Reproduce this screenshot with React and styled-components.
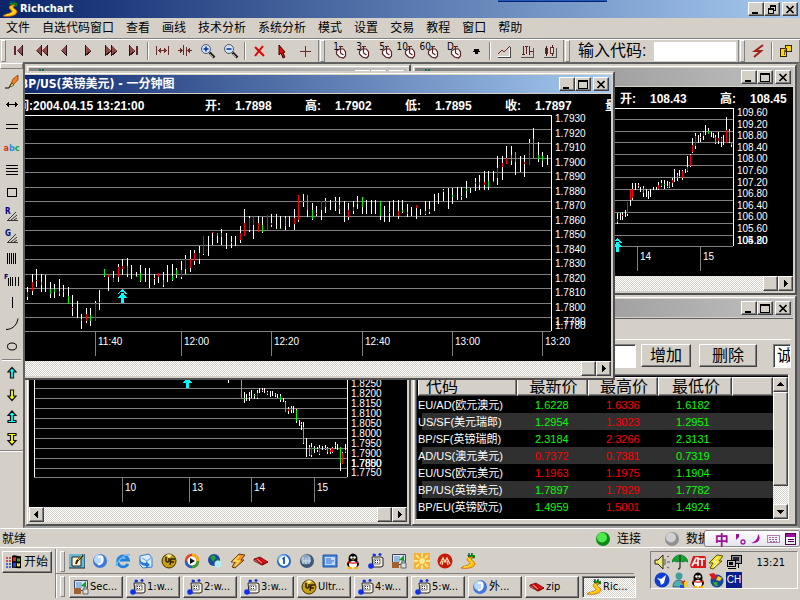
import React from 'react';
import styled, { createGlobalStyle, css } from 'styled-components';

const FACE = '#d4d0c8';
const UP = '#f00';
const DOWN = '#0f0';
const UI_FONT = '"Liberation Sans", "Noto Sans CJK SC", sans-serif';

/* ---------- data ---------- */

const menus = ['文件', '自选代码窗口', '查看', '画线', '技术分析', '系统分析', '模式', '设置', '交易', '教程', '窗口', '帮助'];

// x, high, low, body colour, body top, body bottom
const minuteCandles = [
  [27, 287, 300, UP, 292, 297], [32, 274, 295, UP, 282, 291], [36, 269, 287, UP, 280, 281],
  [41, 274, 292, DOWN, 282, 285], [45, 275, 292], [50, 282, 298, DOWN, 289, 294],
  [54, 284, 298, DOWN, 289, 292], [59, 279, 296, DOWN, 291, 294], [63, 285, 297, DOWN, 291, 292],
  [68, 287, 304, DOWN, 296, 304], [72, 295, 316, UP, 307, 308], [77, 301, 318],
  [81, 314, 329, DOWN, 319, 321], [86, 308, 323, UP, 314, 321], [90, 308, 326, DOWN, 315, 321],
  [95, 301, 321, UP, 303, 321], [99, 290, 310, UP, 302, 303], [104, 269, 277, DOWN, 269, 276],
  [108, 275, 291, UP, 275, 277], [113, 271, 282, UP, 278, 282], [118, 264, 282, UP, 267, 277],
  [122, 259, 275, UP, 266, 269], [127, 258, 277, DOWN, 266, 274], [131, 265, 279],
  [136, 272, 277, DOWN, 276, 277], [140, 265, 282, DOWN, 273, 281], [145, 268, 282],
  [149, 268, 288], [154, 274, 285, UP, 278, 279], [158, 273, 283, UP, 273, 277],
  [163, 272, 287, DOWN, 280, 285], [167, 265, 282], [172, 264, 281, DOWN, 276, 280],
  [176, 268, 278, DOWN, 270, 275], [181, 261, 279, UP, 270, 277], [185, 255, 274, UP, 259, 269],
  [190, 250, 272, UP, 259, 268], [194, 250, 265, UP, 253, 261], [199, 246, 264, UP, 253, 259],
  [203, 236, 255, UP, 236, 254], [208, 236, 256], [212, 232, 245, UP, 232, 233],
  [217, 233, 243, DOWN, 233, 236], [221, 229, 245, DOWN, 233, 237], [226, 233, 249],
  [231, 236, 248, UP, 242, 243], [235, 236, 246], [240, 226, 243, UP, 233, 240],
  [244, 209, 236, UP, 223, 236], [249, 216, 232, UP, 218, 230], [253, 217, 239, UP, 217, 225],
  [258, 216, 232, UP, 223, 232], [262, 217, 233, DOWN, 225, 232], [267, 215, 230, UP, 215, 230],
  [271, 214, 227, UP, 223, 225], [276, 214, 229], [280, 216, 229, DOWN, 228, 229],
  [285, 216, 230, DOWN, 218, 226], [289, 216, 227], [294, 209, 230, UP, 218, 224],
  [298, 195, 222, UP, 195, 220], [303, 194, 207, UP, 201, 202], [307, 195, 217, DOWN, 195, 210],
  [312, 203, 220, DOWN, 210, 219], [316, 206, 216, UP, 213, 214], [321, 201, 220, UP, 201, 210],
  [325, 198, 213, UP, 201, 207], [330, 200, 210], [335, 197, 211, DOWN, 201, 203],
  [339, 197, 214, DOWN, 205, 209], [344, 201, 222], [348, 203, 220, UP, 210, 217],
  [353, 201, 214, UP, 207, 211], [357, 196, 209, DOWN, 202, 204], [362, 197, 214, DOWN, 197, 207],
  [366, 200, 214], [371, 200, 214], [375, 200, 214], [380, 201, 220, DOWN, 201, 216],
  [384, 206, 222], [389, 201, 222, UP, 212, 213], [393, 200, 216], [398, 200, 219, UP, 211, 216],
  [402, 200, 213, DOWN, 210, 212], [407, 204, 217, DOWN, 212, 214], [411, 207, 216],
  [416, 205, 219, UP, 205, 208], [420, 209, 215], [425, 201, 215, UP, 211, 214],
  [429, 201, 214, UP, 209, 212], [434, 194, 211], [438, 193, 204], [443, 189, 201, UP, 190, 192],
  [448, 188, 209], [452, 188, 204, DOWN, 195, 197], [457, 187, 200], [461, 187, 200, UP, 196, 197],
  [466, 181, 198, DOWN, 189, 191], [470, 188, 193], [475, 178, 191, DOWN, 182, 184],
  [479, 175, 190, DOWN, 182, 185], [484, 171, 190, UP, 182, 185], [488, 171, 190, DOWN, 181, 187],
  [493, 171, 182, DOWN, 181, 182], [497, 156, 185, UP, 168, 178], [502, 156, 180, UP, 163, 167],
  [506, 146, 164, UP, 158, 164], [511, 146, 165, DOWN, 155, 161], [515, 152, 175, DOWN, 152, 162],
  [520, 156, 172], [524, 155, 177, UP, 162, 164], [529, 139, 165, UP, 143, 165],
  [533, 128, 158, DOWN, 139, 158], [538, 142, 162, DOWN, 155, 159], [542, 152, 167, DOWN, 156, 161],
  [547, 155, 165],
];

const yenCandles = [
  [617, 213, 224, UP, 219, 222], [620, 213, 220], [622, 212, 220, UP, 215, 216], [625, 210, 217],
  [627, 202, 216, UP, 202, 214], [630, 190, 206, UP, 190, 200], [632, 183, 200, UP, 189, 198],
  [635, 183, 190], [638, 183, 188, UP, 185, 186], [640, 187, 192], [643, 186, 197, DOWN, 188, 193],
  [646, 189, 197], [648, 191, 199], [650, 189, 197], [653, 187, 190], [656, 187, 190],
  [658, 182, 190, UP, 185, 189], [661, 180, 187, UP, 183, 186], [664, 180, 189, DOWN, 184, 185],
  [667, 181, 188, UP, 186, 187], [669, 182, 188, DOWN, 183, 187], [672, 178, 187, UP, 180, 183],
  [674, 169, 182], [677, 173, 181, DOWN, 175, 178], [679, 170, 178, UP, 176, 177],
  [682, 170, 180, UP, 171, 178], [685, 169, 173], [687, 156, 172, UP, 167, 171],
  [690, 154, 167, UP, 155, 166], [692, 138, 153, UP, 145, 152], [695, 133, 149, UP, 136, 146],
  [698, 135, 143], [700, 133, 142, UP, 137, 138], [703, 131, 140, UP, 132, 136], [705, 125, 135],
  [708, 128, 134, DOWN, 131, 134], [711, 132, 137], [713, 133, 138], [715, 135, 144, DOWN, 137, 143],
  [718, 132, 144, UP, 138, 141], [721, 137, 147, UP, 138, 142], [723, 135, 145],
  [726, 117, 143, UP, 130, 143], [729, 129, 143, DOWN, 131, 142], [731, 142, 147, DOWN, 142, 145],
];

const dailyCandles = [
  [228, 380, 383], [241, 380, 398, DOWN, 380, 398], [244, 392, 403, DOWN, 398, 399],
  [246, 394, 401], [249, 392, 401, UP, 396, 397], [251, 390, 398], [254, 394, 399, DOWN, 395, 396],
  [257, 390, 399, UP, 393, 398], [259, 388, 393], [262, 388, 392, UP, 390, 391], [264, 388, 393],
  [267, 391, 395, UP, 392, 394], [270, 391, 397], [272, 391, 396], [275, 393, 397, DOWN, 394, 395],
  [277, 394, 398], [280, 394, 402, DOWN, 396, 400], [283, 398, 402], [285, 401, 412, DOWN, 402, 412],
  [288, 407, 414, UP, 409, 411], [291, 406, 413, DOWN, 408, 410], [293, 406, 413],
  [296, 409, 423, DOWN, 410, 421], [299, 420, 426], [301, 422, 430, UP, 424, 425],
  [303, 422, 444, DOWN, 427, 443], [306, 438, 457], [309, 445, 456, DOWN, 447, 455],
  [311, 443, 457, UP, 447, 455], [314, 446, 453, DOWN, 448, 449], [317, 447, 452, UP, 449, 450],
  [319, 445, 455, UP, 448, 454], [322, 446, 450], [325, 445, 450, UP, 448, 449],
  [327, 447, 454, DOWN, 448, 452], [330, 449, 454, UP, 450, 452], [332, 447, 453, UP, 448, 452],
  [335, 442, 449, DOWN, 445, 446], [337, 444, 450], [340, 447, 471, DOWN, 447, 463],
  [342, 452, 464, UP, 453, 464], [345, 444, 453, UP, 450, 452],
];

const charts = {
  minute: {
    origin: [0, 115], left: 0, right: 551, bottom: 331, candles: minuteCandles,
    grid: [129, 143, 158, 172, 187, 201, 216, 230, 245, 259, 274, 288, 303, 317],
    labels: [
      ['1.7930', 118], ['1.7920', 133], ['1.7910', 147], ['1.7900', 162], ['1.7890', 176],
      ['1.7880', 191], ['1.7870', 205], ['1.7860', 220], ['1.7850', 234], ['1.7840', 249],
      ['1.7830', 263], ['1.7820', 278], ['1.7810', 292], ['1.7800', 307], ['1.7790', 321], ['1.7780', 325],
    ],
    ticks: [['11:40', 95], ['12:00', 181], ['12:20', 271], ['12:40', 362], ['13:00', 452], ['13:20', 542]],
    arrow: [122, 289],
  },
  yen: {
    origin: [415, 108], left: 415, right: 733, bottom: 246, candles: yenCandles,
    grid: [119, 131, 142, 154, 165, 177, 189, 200, 212, 223, 235],
    labels: [
      ['109.60', 112], ['109.20', 124], ['108.80', 135], ['108.40', 147], ['108.00', 158],
      ['107.60', 170], ['107.20', 182], ['106.80', 193], ['106.40', 205], ['106.00', 216],
      ['105.60', 228], ['105.20', 240], ['104.80', 240],
    ],
    ticks: [['14', 637], ['15', 700]],
    arrow: [617, 238],
  },
  daily: {
    origin: [29, 339], left: 34, right: 347, bottom: 477, candles: dailyCandles, leftAxis: true,
    grid: [348, 358, 368, 378, 388, 398, 408, 418, 428, 438, 448, 458, 468],
    labels: [
      ['1.8250', 383], ['1.8200', 393], ['1.8150', 403], ['1.8100', 413], ['1.8050', 423],
      ['1.8000', 433], ['1.7950', 443], ['1.7900', 453], ['1.7850', 463], ['1.7800', 463], ['1.7750', 472],
    ],
    ticks: [['10', 122], ['13', 189], ['14', 251], ['15', 314]],
    arrow: [187, 374],
  },
};

const minuteQuote = [['开:', '1.7898'], ['高:', '1.7902'], ['低:', '1.7895'], ['收:', '1.7897'], ['量:', '']];
const yenQuote = [['开:', '108.43'], ['高:', '108.45']];

const quotes = [
  ['EU/AD(欧元澳元)', '1.6228', DOWN, '1.6336', UP, '1.6182', DOWN],
  ['US/SF(美元瑞郎)', '1.2954', DOWN, '1.3023', UP, '1.2951', DOWN],
  ['BP/SF(英镑瑞朗)', '2.3184', DOWN, '2.3266', UP, '2.3131', DOWN],
  ['AD/US(澳元美元)', '0.7372', UP, '0.7381', UP, '0.7319', DOWN],
  ['EU/US(欧元美元)', '1.1963', UP, '1.1975', UP, '1.1904', DOWN],
  ['BP/US(英镑美元)', '1.7897', DOWN, '1.7929', UP, '1.7782', DOWN],
  ['BP/EU(英镑欧元)', '1.4959', DOWN, '1.5001', UP, '1.4924', DOWN],
];

/* ---------- icons ---------- */

const Svg = ({ w = 16, h = 16, crisp = true, children }) => (
  <svg width={w} height={h} viewBox={`0 0 ${w} ${h}`} shapeRendering={crisp ? 'crispEdges' : 'auto'} fill="none" aria-hidden="true">
    {children}
  </svg>
);

const RichIcon = () => (
  <Svg crisp={false}>
    <path d="M9 0v4M12 0v4" stroke="#064" strokeWidth="1.500" />
    <path d="M7 2h8v3l-5 1z" fill="#0a8a1e" />
    <path d="M8 3h1M11 2h1M13 4h1" stroke="#063" strokeWidth="2" />
    <path d="M13 4C8 4 6 6 8 8c2 2 3 3 0 4-2 1-5 1-7 3 6 1 13 0 14-4 0-3-4-3-4-5 0-1 2-1 2-2z" fill="#ffc400" stroke="#d86000" strokeWidth=".8" />
    <path d="M9 5c-1 2 4 3 3 5-1 3-5 4-8 4" stroke="#ffe94a" />
  </Svg>
);

const Tri = ({ x, dir }) => (
  <g>
    <path d={dir < 0 ? `M${x + 6} 2v11l-6-5v-1z` : `M${x} 2v11l6-5v-1z`} fill="#8c4c4c" />
    <path d={dir < 0 ? `M${x + 5} 2v11M${x + 1} 8l5 5` : `M${x} 2v11M${x} 13l6-5`} stroke="#2c1212" />
  </g>
);
const Bar = ({ x }) => <path d={`M${x} 3h2v9h-2z`} fill="#5c2828" />;

const Magnifier = ({ plus }) => (
  <Svg crisp={false}>
    <path d="M9.500 9.500l5 5" stroke="#222" strokeWidth="2.500" />
    <path d="M10 11l3 3" stroke="#c0a0a0" />
    <circle cx="6" cy="6" r="4.500" fill="#cfe4ff" stroke="#556" strokeWidth="1" />
    <path d={plus ? 'M3.500 6h5M6 3.500v5' : 'M3.500 6h5'} stroke="#003090" strokeWidth="1.500" />
  </Svg>
);

const Clock = ({ label }) => (
  <Svg w={22} h={18} crisp={false}>
    <path d="M9.500 9v3l3 3 4 1 2-2v-4l-2-3h-4z" fill="#fff" stroke="#5c2020" strokeWidth="1.200" />
    <path d="M13.500 4v7l3 2M12 4.500h4" stroke="#5c2020" strokeWidth="1.200" />
    <text x="12" y="8" textAnchor="end" fontSize="10" fontFamily="DejaVu Sans Condensed" fill="#000">{label}</text>
  </Svg>
);

const navIcons = [
  ['第一根', <Svg><Bar x={3} /><Tri x={6} dir={-1} /></Svg>],
  ['快退', <Svg><Tri x={2} dir={-1} /><Tri x={8} dir={-1} /></Svg>],
  ['后退', <Svg><Tri x={4} dir={-1} /></Svg>],
  ['前进', <Svg><Tri x={5} dir={1} /></Svg>],
  ['快进', <Svg><Tri x={2} dir={1} /><Tri x={8} dir={1} /></Svg>],
  ['最后一根', <Svg><Tri x={3} dir={1} /><Bar x={10} /></Svg>],
];
const zoomIcons = [
  ['拉宽', <Svg><path d="M2.500 3v9M14.500 3v9M4 7.500h9M6.500 5v5M10.500 5v5M5.500 6v3M11.500 6v3" stroke="#6a2c2c" /></Svg>],
  ['压缩', <Svg><path d="M6.500 2v10M9.500 4v9M1 7.500h5M10 7.500h5M3.500 5v5M4.500 6v3M12.500 5v5M11.500 6v3" stroke="#6a2c2c" /></Svg>],
  ['放大', <Magnifier plus />],
  ['缩小', <Magnifier />],
];
const pointerIcons = [
  ['删除画线', <Svg crisp={false}><path d="M4 4l9 9M12 3l-8 10" stroke="#e00000" strokeWidth="2" /></Svg>],
  ['选择', <Svg crisp={false}><path d="M5 2v10l2-2 2 5 2-1-2-4 2-1z" fill="#e01010" stroke="#400" strokeWidth="1" /></Svg>],
  ['十字光标', <Svg><path d="M3 8.500h11M8.500 3v11" stroke="#6a2c2c" /></Svg>],
];
const periods = ['1', '3', '5', '10', '60', 'D'];
const chartIcons = [
  ['走势图', <Svg><path d="M2 14h12V4" stroke="#444" /><path d="M2 13h11V5" stroke="#fff" /><path d="M2 11l4-4 2 2 6-6" stroke="#6a2c2c" /></Svg>],
  ['美国线', <Svg><path d="M2 14h12V5" stroke="#555" /><path d="M4.500 3v9M3 11.500h3M7.500 3v8M6 3.500h3M10.500 3v9M10 8.500h4" stroke="#5c2020" /></Svg>],
  ['K线图', <Svg><path d="M2 14h12V5" stroke="#555" /><path d="M3 5h3v6h-3zM8 4h4v7h-4z" fill="#6a2c2c" /><path d="M4.500 3v10M10 2v11" stroke="#4a1c1c" /><path d="M9 5h2v5h-2z" fill="#e8d8d0" /></Svg>],
];

const UpDown = ({ color, down, both }) => (
  <Svg crisp={false}>
    <g transform={down ? 'rotate(180 8 8)' : undefined}>
      <path d={both ? 'M8 2l4 4.500H9.500v5H12v2H4v-2h2.500v-5H4z' : 'M8 2.500l4 4.500H9.500v6h-3V7H4z'} fill={color} stroke="#111" strokeWidth="1.200" />
    </g>
  </Svg>
);

const drawIcons = [
  ['画笔', <Svg crisp={false}><path d="M1 14h4l2-4" stroke="#000" /><path d="M7 10l2-5 5-4 0 5-5 5z" fill="#f08020" stroke="#803000" strokeWidth=".7" /><path d="M6 12l2-3 2 2-3 2z" fill="#f8d820" stroke="#000" strokeWidth=".5" /></Svg>],
  ['水平箭头', <Svg><path d="M2 8.500h12M4.500 6v5M11.500 6v5M3.500 7v3M12.500 7v3" stroke="#000" /></Svg>],
  ['平行线', <Svg><path d="M2 6.500h12M2 10.500h12" stroke="#000" /></Svg>],
  ['文字', <Abc />],
  ['黄金分割', <Svg><path d="M2 3.500h12M2 6.500h12M2 9.500h12M2 12.500h12" stroke="#000" /></Svg>],
  ['矩形', <Svg><path d="M3.500 4.500h9v8h-9z" stroke="#000" /></Svg>],
  ['R', <Svg crisp={false}><path d="M3 14.500h11M4 14L12 6M7 14l6-5M10 14l3-2" stroke="#333" /><text x="1" y="8" fontSize="8" fontWeight="700" fontFamily="DejaVu Sans Condensed" fill="#000080">R</text></Svg>],
  ['G', <Svg crisp={false}><path d="M3 14.500h11M4 14L12 6M7 14l6-5M10 14l3-2" stroke="#333" /><text x="1" y="8" fontSize="8" fontWeight="700" fontFamily="DejaVu Sans Condensed" fill="#000080">G</text></Svg>],
  ['周期线', <Svg><path d="M3.500 3v11M5.500 3v11M7.500 3v11M9.500 3v11M11.500 3v11" stroke="#000" /></Svg>],
  ['F', <Svg><path d="M4.500 6v8M6.500 5v9M8.500 5v9M11.500 5v9M14.500 5v9" stroke="#000" /><text x="0" y="7" fontSize="7" fontWeight="700" fontFamily="DejaVu Sans Condensed" fill="#000080">F</text></Svg>],
  ['垂直线', <Svg><path d="M8.500 3v11" stroke="#000" /></Svg>],
  ['圆弧', <Svg crisp={false}><path d="M2 13.500c6 0 11-4 12-11" stroke="#000" /></Svg>],
  ['椭圆', <Svg crisp={false}><ellipse cx="8" cy="8.500" rx="4.500" ry="3.500" stroke="#000" /></Svg>],
];
const markIcons = [
  ['上箭头', <UpDown color="#0ff" />],
  ['下箭头', <UpDown color="#ff0" down />],
  ['买入', <UpDown color="#0ff" both />],
  ['卖出', <UpDown color="#ff0" down both />],
];

function Abc() {
  return <AbcText><span>a</span><span>b</span><span>c</span></AbcText>;
}

const Ball = ({ a, b, children }) => (
  <Svg crisp={false}>
    <circle cx="8" cy="8" r="7" fill={b} />
    <circle cx="7" cy="6.500" r="5" fill={a} />
    {children}
  </Svg>
);
const PcIcon = () => (
  <Svg crisp={false}>
    <path d="M4 4h9l2 1v8l-2 1H5z" fill="#f4f0e0" stroke="#222" strokeWidth="1" />
    <path d="M6 6h6v5H6z" fill="#fff" stroke="#555" strokeWidth=".8" />
    <path d="M7 7.500h1M9 7.500h1M11 7.500h.5M7 9.500h1M9 9.500h1" stroke="#333" />
    <path d="M6 2h2M12 0v3M10.500 1.500h3" stroke="#1028e0" strokeWidth="1.300" />
    <circle cx="3" cy="13" r="2.800" fill="#1030f0" />
    <circle cx="6" cy="2" r="1.500" fill="#1030f0" />
  </Svg>
);
const SecureIcon = () => (
  <Svg crisp={false}>
    <path d="M1.500 1.500h13v10h-13z" fill="#d8e8f4" stroke="#445" />
    <path d="M3 3h6v6H3z" fill="#90b8e0" />
    <path d="M8 7l5-5v6z" fill="#10a010" />
    <path d="M1 9h7v6H1z" fill="#a06030" />
    <path d="M10 10h5v5h-5z" fill="#ddd" stroke="#666" />
    <path d="M11 10V8h3v2" stroke="#666" />
  </Svg>
);
const Penguin = () => (
  <Svg crisp={false}>
    <ellipse cx="8" cy="6" rx="4.500" ry="5.500" fill="#000" />
    <ellipse cx="8" cy="11" rx="6" ry="4" fill="#000" />
    <ellipse cx="8" cy="11.500" rx="4" ry="3.500" fill="#fff" />
    <circle cx="6.500" cy="4.500" r="1.300" fill="#fff" /><circle cx="9.500" cy="4.500" r="1.300" fill="#fff" />
    <path d="M6 6.500h4l-2 1z" fill="#ffb000" />
    <path d="M3 8c3 2 7 2 10 0v2c-3 1-7 1-10 0z" fill="#e01010" />
    <path d="M3 15h4M9 15h4" stroke="#ffb000" strokeWidth="2" />
  </Svg>
);
const UltraIcon = () => (
  <Svg crisp={false}>
    <circle cx="8" cy="8" r="7" fill="#c8a010" stroke="#403000" />
    <path d="M5 2a7 7 0 0 1 6 0L8 5z" fill="#fff0a0" />
    <path d="M5 4v4q1 2 3 0V5M9 12l1-6h4M10 9h3" stroke="#302000" strokeWidth="1.500" />
  </Svg>
);
const BlueJ = () => <Ball a="#b8d8ff" b="#4078e0"><path d="M6 4h4v5q-1 3-4 2" stroke="#fff" strokeWidth="2" /></Ball>;
const ZipIcon = () => (
  <Svg crisp={false}>
    <path d="M1 6l6-2 8 5-6 3z" fill="#e81010" stroke="#500" strokeWidth=".7" />
    <path d="M1 6v2l8 4 6-3M6 5l5 6" stroke="#700" strokeWidth=".8" />
    <path d="M4 6l5 4" stroke="#fff" strokeWidth=".7" />
  </Svg>
);
const WinampIcon = () => (
  <Svg crisp={false}>
    <path d="M9 1l6 1-4 5h3l-9 8-3-1 3-5H1z" fill="#f89020" stroke="#604020" />
    <path d="M9 3L4 8h5l-4 5" stroke="#ffe060" strokeWidth="1.500" />
  </Svg>
);

const launchIcons = [
  ['显示桌面', <Svg crisp={false}><path d="M0 1h16v14H0z" fill="#68b8d8" /><path d="M0 15h16V1" stroke="#123" /><path d="M3 4h9v9H3z" fill="#f8f4d8" stroke="#222" /><path d="M14 2L8 8l-1 3" stroke="#302000" strokeWidth="2" /><path d="M13 2L9 7" stroke="#f0d020" /></Svg>],
  ['J', <BlueJ />],
  ['Internet Explorer', <Svg crisp={false}><path d="M13 11a5.500 5.500 0 1 1 .5-4H5" stroke="#2080e0" strokeWidth="2.800" /><path d="M1 13C3 6 10 1 15 2" stroke="#60b8ff" strokeWidth="1.500" /></Svg>],
  ['Outlook', <Svg crisp={false}><path d="M2 3l9-2 3 4v9l-9 1-3-3z" fill="#d8ecff" stroke="#3878c8" /><path d="M4 5l5 3 5-4" stroke="#80b0e0" strokeWidth="1.300" /><path d="M1 4q1 6 7 6V8l4 4-4 3v-2Q1 13 1 4z" fill="#2878d8" /></Svg>],
  ['UltraEdit', <UltraIcon />],
  ['Media Player', <Svg crisp={false}><circle cx="8" cy="8" r="6" fill="#fff" stroke="#e04020" strokeWidth="2.500" /><path d="M8 2a6 6 0 0 1 6 6" stroke="#f8b010" strokeWidth="2.500" /><path d="M14 8a6 6 0 0 1-6 6" stroke="#30a030" strokeWidth="2.500" /><path d="M8 14a6 6 0 0 1-6-6" stroke="#2060d0" strokeWidth="2.500" /><path d="M6 5l5 3-5 3z" fill="#111" /></Svg>],
  ['Messenger', <Svg crisp={false}><circle cx="7" cy="7" r="6" fill="#1848a0" /><path d="M3 4l4-2 2 3-3 4z" fill="#20a030" /><path d="M8 9l3-3 2 3z" fill="#20a030" /><circle cx="11" cy="11" r="3.500" fill="#b8e8f0" /></Svg>],
  ['Winamp', <WinampIcon />],
  ['压缩', <ZipIcon />],
  ['一', <Ball a="#80b8f8" b="#2868c8"><circle cx="8" cy="8" r="5" fill="#fff" /><path d="M6.500 6L8 5v6" stroke="#1050b0" strokeWidth="1.800" /></Ball>],
  ['网络', <Ball a="#90a8c0" b="#405878"><path d="M4 4v7M7 5v6M10 4v7M4 8h8" stroke="#d0e0f0" /></Ball>],
  ['邮件', <Svg crisp={false}><path d="M1 2h14v12H1z" fill="#4888e0" stroke="#2050a0" /><path d="M3 4h10v8H3z" fill="#c0dcff" /><path d="M4 6h5M4 8h8M4 10h6" stroke="#2868c8" /></Svg>],
  ['QQ', <Penguin />],
  ['终端', <PcIcon />],
  ['SecureCRT', <SecureIcon />],
  ['太阳', <Svg crisp={false}><path d="M0 0h16v16H0z" fill="#f8b030" /><circle cx="8" cy="8" r="3" fill="#ffe890" /><path d="M8 0v4M8 12v4M0 8h4M12 8h4M2 2l3 3M11 11l3 3M14 2l-3 3M2 14l3-3" stroke="#fff4b0" strokeWidth="1.500" /></Svg>],
  ['M', <Svg crisp={false}><circle cx="8" cy="8" r="7.500" fill="#c81808" /><path d="M3 11l3-6 2 4 2-4 3 6M5 12l1-4M11 12l-1-4" stroke="#ffd8b0" strokeWidth="1.300" /></Svg>],
  ['Richchart', <RichIcon />],
];

const tasks = [
  ['Sec...', <SecureIcon />], ['1:w...', <PcIcon />], ['2:w...', <PcIcon />], ['3:w...', <PcIcon />],
  ['Ultr...', <UltraIcon />], ['4:w...', <PcIcon />], ['5:w...', <PcIcon />], ['外...', <BlueJ />],
  ['zip', <ZipIcon />], ['Ric...', <RichIcon />],
];

const trayIcons = [
  <Svg crisp={false}><path d="M1 6h3l5-5v14l-5-5H1z" fill="#f0e870" stroke="#222" /><path d="M11 5v6M13 3l2-1M13 8h3M13 13l2 1" stroke="#555" /></Svg>,
  <Svg crisp={false}><path d="M0 8C1 3 5 1 8 1s7 2 8 7l-3-1-2 1-3-1-3 1-2-1z" fill="#10a828" stroke="#064" strokeWidth=".7" /><path d="M8 1v12q0 2-2 2" stroke="#333" strokeWidth="1.300" /></Svg>,
  <Svg crisp={false}><path d="M3 2h12l1 2v10H1l-1-3z" fill="#e01818" /><path d="M2 12l4-8h2v8M4 9h4M9 5h6M12 5v7" stroke="#fff" strokeWidth="1.700" /></Svg>,
  <Svg crisp={false}><path d="M9 1l6 1-4 5h3l-9 8-3-1 3-5H1z" fill="#f4e020" stroke="#605000" /><path d="M10 3L5 8h5l-4 5" stroke="#fff" /></Svg>,
  <Svg><path d="M5 1h10v8H5z" fill="#999" stroke="#000" /><path d="M7 3h6v4H7z" fill="#223" /><path d="M1 6h8v6H1z" fill="#bbb" stroke="#000" /><path d="M3 8h4v3H3z" fill="#000" /><path d="M2 14h8M12 10v4" stroke="#000" /></Svg>,
  <Svg crisp={false}><circle cx="8" cy="8" r="7.500" fill="#1040d0" /><path d="M3 6l4 1 5-4-2 8-3 2-1-4z" fill="#fff" /></Svg>,
  <Svg crisp={false}><circle cx="7" cy="4" r="3.500" fill="#40a0a0" /><path d="M1 15c0-5 3-7 6-7s5 2 6 7z" fill="#50b0b0" stroke="#246" strokeWidth=".7" /><path d="M9 10l4-2v7z" fill="#e02020" /><path d="M12 10l4-1v6h-4z" fill="#f0d020" /><path d="M8 13h4v3H8z" fill="#2050e0" /></Svg>,
  <Penguin />,
  <Svg crisp={false}><circle cx="9" cy="9" r="6.500" fill="#184898" /><path d="M1 2l5-1 3 4-4 3z" fill="#e01818" /><path d="M10 4l4 2-2 3-4-1z" fill="#f0d020" /><path d="M5 10l4 0 1 4-3 0z" fill="#30b030" /></Svg>,
];

/* ---------- shared pieces ---------- */

const raised = css`
  border: 1px solid;
  border-color: #fff #404040 #404040 #fff;
  box-shadow: inset -1px -1px 0 #808080;
`;
const sunken = css`
  border: 1px solid;
  border-color: #808080 #fff #fff #808080;
  box-shadow: inset 1px 1px 0 #404040;
`;

const GlobalStyle = createGlobalStyle`
  * { box-sizing: border-box; }
  body { margin: 0; background: ${FACE}; overflow: hidden; }
  button, input, select { font: inherit; color: inherit; margin: 0; padding: 0; border-radius: 0; }
  svg { display: block; flex: none; }
`;

const Desktop = styled.div`
  display: flex;
  flex-direction: column;
  height: 100vh;
  background: ${FACE};
  color: #000;
  font: 12px/16px ${UI_FONT};
`;

const TitleBar = styled.header`
  position: relative;
  display: flex;
  align-items: center;
  flex: none;
  height: 18px;
  padding: 0 2px;
  background: ${p => (p.$inactive
    ? 'linear-gradient(90deg, #808080, #c0c0c0)'
    : 'linear-gradient(90deg, #0a246a, #a6caf0)')};
  color: ${p => (p.$inactive ? FACE : '#fff')};
  font-family: "DejaVu Sans Condensed", "Noto Sans CJK SC", sans-serif;
  font-size: ${p => (p.$app ? '11px' : '12px')};
  font-weight: 700;
  white-space: nowrap;
`;
const TitleText = styled.span`
  flex: 1;
  padding-left: 2px;
`;
const TopTab = styled.i`
  position: absolute;
  top: 0;
  right: 193px;
  width: 109px;
  height: 2px;
  background: #2058c0;
  border-bottom: 1px solid #0a246a;
`;
const CaptionButton = styled.button`
  ${raised}
  display: grid;
  place-items: center;
  width: 16px;
  height: 14px;
  background: ${FACE};
  &:last-child { margin-left: 2px; }
`;

const Caption = ({ icon, title, inactive, app }) => (
  <TitleBar $inactive={inactive} $app={app}>
    {icon}
    <TitleText>{title}</TitleText>
    {app && <TopTab />}
    <CaptionButton aria-label="最小化"><Svg w={10} h={9}><path d="M1 7h6v2H1z" fill="#000" /></Svg></CaptionButton>
    <CaptionButton aria-label="还原">
      {app
        ? <Svg w={10} h={9}><path d="M3 0h6v2H3zM1 3h6v2H1z" fill="#000" /><path d="M3.500 0v3M8.500 1v5M7 5.500h2M1.500 4v5M6.500 4v5M1 8.500h6" stroke="#000" /></Svg>
        : <Svg w={10} h={9}><path d="M0 0h10v2H0z" fill="#000" /><path d="M.5.5h9v8h-9z" stroke="#000" /></Svg>}
    </CaptionButton>
    <CaptionButton aria-label="关闭"><Svg w={10} h={9} crisp={false}><path d="M1.500 1l7 7M8.500 1l-7 7" stroke="#000" strokeWidth="1.700" /></Svg></CaptionButton>
  </TitleBar>
);

/* ---------- menu and toolbars ---------- */

const MenuBar = styled.nav`
  display: flex;
  align-items: center;
  flex: none;
  height: 20px;
`;
const MenuButton = styled.button`
  padding: 0 6px;
  border: 0;
  background: none;
  white-space: nowrap;
`;
const Toolbar = styled.div`
  display: flex;
  flex: none;
  height: 24px;
  border-top: 1px solid #808080;
  box-shadow: inset 0 1px 0 #fff;
  padding-top: 1px;
`;
const Band = styled.div`
  display: flex;
  align-items: center;
  flex: ${p => (p.$grow ? '1' : 'none')};
  min-width: 0;
  padding: 0 2px 0 1px;
  border-right: 1px solid #808080;
  &::before {
    content: '';
    flex: none;
    align-self: stretch;
    width: 3px;
    margin-right: ${p => (p.$grow ? '8px' : '1px')};
    border: 1px solid;
    border-color: #fff #808080 #808080 #fff;
  }
`;
const ToolButton = styled.button`
  display: grid;
  place-items: center;
  flex: none;
  width: 23px;
  height: 22px;
  border: 0;
  background: none;
`;
const Separator = styled.i`
  flex: none;
  align-self: stretch;
  width: 2px;
  margin: 2px 1px 2px 2px;
  border-left: 1px solid #808080;
  border-right: 1px solid #fff;
`;
const CodeLabel = styled.label`
  flex: none;
  font-size: 16px;
`;
const CodeInput = styled.input`
  flex: 1;
  min-width: 0;
  height: 19px;
  margin-left: 8px;
  border: 0;
  background: #fff;
`;

const Tools = ({ items }) => items.map(([name, icon]) => (
  <ToolButton key={name} aria-label={name}>{icon}</ToolButton>
));

/* ---------- work area ---------- */

const Middle = styled.main`
  display: flex;
  flex: 1;
  min-height: 0;
`;
const SideBar = styled.aside`
  flex: none;
  width: 23px;
`;
const SideTools = styled.div`
  display: flex;
  flex-direction: column;
  border-bottom: 1px solid #808080;
  box-shadow: 0 1px 0 #fff;
  &::before {
    content: '';
    height: 4px;
    margin: 1px 0 2px;
    border: 1px solid;
    border-color: #fff #808080 #808080 #fff;
  }
`;
const SideRule = styled.i`
  height: 2px;
  margin: 2px 2px 1px;
  border-top: 1px solid #808080;
  border-bottom: 1px solid #fff;
`;
const AbcText = styled.span`
  font: 700 9px/12px "DejaVu Sans Condensed", sans-serif;
  span:nth-child(1) { color: #e03010; }
  span:nth-child(2) { color: #2090e0; }
  span:nth-child(3) { color: #10a050; }
`;

const Workspace = styled.section`
  position: relative;
  display: grid;
  grid-template: minmax(0, 1fr) minmax(0, 1fr) / minmax(0, 1fr) minmax(0, 1fr);
  flex: 1;
  min-width: 0;
  border: 2px solid;
  border-right-width: 3px;
  border-color: #606060 #808080 #a0a0a0 #606060;
  background: #808080;
  overflow: hidden;
`;
const windowFrame = css`
  display: flex;
  flex-direction: column;
  min-width: 0;
  min-height: 0;
  padding: 2px;
  border: 2px solid;
  border-color: ${FACE} #505050 #505050 ${FACE};
  background: ${FACE};
  box-shadow: inset 1px 1px 0 #fff;
`;
const TiledWindow = styled.article`${windowFrame}`;
const FloatingWindow = styled.article`
  ${windowFrame}
  position: absolute;
  left: -29px;
  top: 7px;
  width: 619px;
  height: 309px;
`;
const ChartBody = styled.div`
  display: flex;
  flex-direction: column;
  flex: 1;
  min-height: 0;
  margin-top: 1px;
  background: #000;
  overflow: hidden;
`;
const InfoBar = styled.dl`
  display: flex;
  flex: none;
  height: 21px;
  margin: 0;
  padding: 4px 0 0 5px;
  color: #fff;
  font-weight: 700;
  white-space: nowrap;
`;
const InfoItem = styled.div`
  display: flex;
  flex: none;
  width: ${p => (p.$wide ? '200px' : '100px')};
  dt { width: ${p => (p.$wide ? 'auto' : '30px')}; }
  dd { margin: 0; }
`;
const Plot = styled.svg`
  width: 100%;
  flex: 1;
  min-height: 0;
  overflow: visible;
  font: 10px ${UI_FONT};
`;

const ScrollTrack = styled.div`
  display: flex;
  flex: none;
  flex-direction: ${p => (p.$vertical ? 'column' : 'row')};
  ${p => (p.$vertical ? 'width: 15px;' : 'height: 15px;')}
  background: repeating-conic-gradient(#fff 0 25%, ${FACE} 0 50%) 0 0 / 2px 2px;
`;
const ScrollButton = styled.button`
  ${raised}
  display: grid;
  place-items: center;
  flex: none;
  width: 15px;
  height: 15px;
  background: ${FACE};
`;
const ScrollThumb = styled.div`
  ${raised}
  flex: none;
  width: 15px;
  height: ${p => (p.$vertical ? '94px' : '15px')};
  margin-left: ${p => (p.$vertical ? '0' : 'auto')};
  margin-bottom: ${p => (p.$vertical ? 'auto' : '0')};
  background: ${FACE};
`;
const arrowPaths = { left: 'M5 0v7L1 4V3z', right: 'M2 0v7l4-3V3z', up: 'M0 5h7L4 1H3z', down: 'M0 2h7L4 6H3z' };
const Arrow = ({ dir }) => (
  <ScrollButton aria-label={dir}>
    <Svg w={7} h={7}><path d={arrowPaths[dir]} fill="#000" /></Svg>
  </ScrollButton>
);
const HScroll = () => (
  <ScrollTrack><Arrow dir="left" /><ScrollThumb /><Arrow dir="right" /></ScrollTrack>
);

const Chart = ({ chart, time, quote }) => {
  const { origin, left, right, bottom, grid, labels, ticks, candles, arrow, leftAxis } = chart;
  const [ax, ay] = arrow;
  return (
    <>
      <ChartBody>
        <InfoBar>
          {quote && <InfoItem $wide><dt>时间:</dt><dd>{time}</dd></InfoItem>}
          {quote && quote.map(([k, v]) => <InfoItem key={k}><dt>{k}</dt><dd>{v}</dd></InfoItem>)}
        </InfoBar>
        <Plot role="img" aria-label="K线图">
          <g transform={`translate(${-origin[0]} ${-origin[1]})`} shapeRendering="crispEdges">
            {grid.map(y => <rect key={y} x={left} y={y} width={right - left} height="1" fill="#808080" />)}
            <rect x={left} y={bottom} width={right - left} height="1" fill="#808080" />
            <rect x={left} y={origin[1]} width={right - left} height="1" fill="#fff" />
            <rect x={right} y={origin[1]} width="1" height={bottom - origin[1]} fill="#fff" />
            {leftAxis && <rect x={left} y={origin[1]} width="1" height={bottom - origin[1]} fill="#fff" />}
            {candles.map(([x, hi, lo, color, top, end]) => (
              <g key={x}>
                <rect x={x} y={hi} width="1" height={lo - hi} fill="#fff" />
                {color && <rect x={x} y={top} width="1" height={end - top} fill={color} />}
              </g>
            ))}
            <path d={`M${ax} ${ay}l5 5h-3l3 4h-3v5h-3v-5h-3l3-4h-3l4-5z`} fill="#0ff" />
            <path d={`M${ax - 4} ${ay + 6}l4-3 5 3`} stroke="#000" fill="none" />
            {ticks.map(([label, x]) => (
              <g key={label}>
                <rect x={x} y={bottom} width="1" height="25" fill="#808080" />
                <text x={x + 3} y={bottom + 14} fill="#fff">{label}</text>
              </g>
            ))}
            {labels.map(([label, y]) => <text key={label} x={right + 4} y={y + 4} fill="#fff">{label}</text>)}
          </g>
        </Plot>
      </ChartBody>
      <HScroll />
    </>
  );
};

/* ---------- quote list ---------- */

const QuoteBody = styled.div`
  display: flex;
  flex-direction: column;
  flex: 1;
  min-height: 0;
  margin-top: 1px;
  padding: 0 2px 2px 0;
  border-top: 1px solid #606060;
`;
const QuoteStrip = styled.div`
  flex: none;
  height: 21px;
  border-bottom: 1px solid #fff;
`;
const QuoteForm = styled.form`
  display: flex;
  flex: none;
  align-items: flex-start;
  height: 34px;
  padding-top: 4px;
  font-size: 16px;
  line-height: 20px;
`;
const AddInput = styled.input`
  ${sunken}
  flex: 1;
  min-width: 0;
  height: 24px;
  margin-right: 5px;
  background: #fff;
`;
const PushButton = styled.button`
  ${raised}
  height: 23px;
  margin-right: ${p => (p.$last ? '16px' : '8px')};
  padding: 0 ${p => (p.$last ? '12px' : '8px')};
  background: ${FACE};
`;
const GroupSelect = styled.select`
  ${sunken}
  appearance: none;
  width: 18px;
  height: 24px;
  padding-left: 3px;
  background: #fff;
`;
const QuoteList = styled.div`
  ${sunken}
  display: flex;
  flex: 1;
  min-height: 0;
  padding: 2px 0 0 2px;
  margin-right: 2px;
  background: #000;
`;
const TableClip = styled.div`
  flex: 1;
  min-width: 0;
  overflow: hidden;
`;
const Table = styled.table`
  width: 100%;
  table-layout: fixed;
  border-collapse: separate;
  border-spacing: 0;
  font-size: 11px;
`;
const HeadCell = styled.th`
  ${raised}
  width: ${p => p.$w || 'auto'};
  height: 19px;
  padding: 0 0 0 ${p => (p.$first ? '7px' : '2px')};
  background: ${FACE};
  font-size: 16px;
  font-weight: 400;
  line-height: 16px;
  text-align: ${p => (p.$first ? 'left' : 'center')};
`;
const Row = styled.tr`
  color: #fff;
  &:nth-child(even) td { background: #303030; }
  &:nth-child(even) td:first-child { background: linear-gradient(90deg, #000 4px, #303030 4px); }
`;
const NameCell = styled.td`
  height: 17px;
  padding: 0;
  line-height: 16px;
  white-space: nowrap;
`;
const PriceCell = styled.td`
  padding: 0 0 0 18px;
  color: ${p => p.$color};
`;

const QuoteWindow = () => (
  <TiledWindow>
    <Caption inactive icon={<RichIcon />} title="" />
    <QuoteBody>
      <QuoteStrip />
      <QuoteForm onSubmit={e => e.preventDefault()}>
        <AddInput aria-label="代码" />
        <PushButton type="button">增加</PushButton>
        <PushButton type="button" $last>删除</PushButton>
        <GroupSelect aria-label="分组"><option>诚</option></GroupSelect>
      </QuoteForm>
      <QuoteList>
        <TableClip>
          <Table>
            <thead>
              <tr>
                <HeadCell $first $w="99px">代码</HeadCell>
                <HeadCell $w="71px">最新价</HeadCell>
                <HeadCell $w="70px">最高价</HeadCell>
                <HeadCell $w="74px">最低价</HeadCell>
                <HeadCell aria-label="其他" />
              </tr>
            </thead>
            <tbody>
              {quotes.map(([name, last, c1, high, c2, low, c3]) => (
                <Row key={name}>
                  <NameCell>{name}</NameCell>
                  <PriceCell $color={c1}>{last}</PriceCell>
                  <PriceCell $color={c2}>{high}</PriceCell>
                  <PriceCell $color={c3}>{low}</PriceCell>
                  <td />
                </Row>
              ))}
            </tbody>
          </Table>
        </TableClip>
        <ScrollTrack $vertical><Arrow dir="up" /><ScrollThumb $vertical /><Arrow dir="down" /></ScrollTrack>
      </QuoteList>
    </QuoteBody>
  </TiledWindow>
);

/* ---------- status bar and taskbar ---------- */

const StatusBar = styled.footer`
  position: relative;
  display: flex;
  align-items: center;
  flex: none;
  height: 20px;
  padding: 2px 0 0 2px;
  border-top: 1px solid #fff;
  border-bottom: 1px solid #fff;
`;
const StatusItem = styled.span`
  display: flex;
  align-items: center;
  gap: 6px;
  width: ${p => (p.$last ? '136px' : '69px')};
  margin-left: ${p => (p.$last ? '0' : 'auto')};
  white-space: nowrap;
`;
const ImeBar = styled.div`
  position: absolute;
  right: 0;
  top: 1px;
  display: flex;
  align-items: center;
  justify-content: space-around;
  width: 96px;
  height: 17px;
  padding-left: 7px;
  border: 1px solid #888;
  border-radius: 2px;
  background: linear-gradient(#fff, #e4e4ec);
  color: #a010a0;
  font: 700 14px/14px "Noto Sans CJK SC", sans-serif;
`;

const TaskBar = styled.footer`
  display: flex;
  flex: none;
  height: 52px;
  padding: 3px 2px 2px;
`;
const StartButton = styled.button`
  ${raised}
  display: flex;
  align-items: center;
  justify-content: center;
  gap: 2px;
  flex: none;
  width: 50px;
  height: 22px;
  background: ${FACE};
`;
const TaskRows = styled.div`
  flex: 1;
  min-width: 0;
  margin: -2px 16px 0 3px;
  border-left: 1px solid #808080;
  box-shadow: inset 1px 0 0 #fff;
`;
const TaskRow = styled.div`
  display: flex;
  align-items: center;
  height: 25px;
  padding-left: 4px;
  gap: ${p => (p.$gap ? '3px' : '0')};
  border-bottom: ${p => (p.$gap ? '0' : '1px solid #808080')};
  &::before {
    content: '';
    flex: none;
    width: 3px;
    height: 19px;
    margin-right: ${p => (p.$gap ? '1px' : '0')};
    border: 1px solid;
    border-color: #fff #808080 #808080 #fff;
  }
`;
const TaskButton = styled.button`
  ${p => (p.$active ? sunken : raised)}
  display: flex;
  align-items: center;
  gap: 1px;
  flex: none;
  width: 54px;
  height: 22px;
  padding-left: 3px;
  background: ${p => (p.$active
    ? `repeating-conic-gradient(#fff 0 25%, ${FACE} 0 50%) 0 0 / 2px 2px`
    : FACE)};
  font-family: "DejaVu Sans Condensed", "Noto Sans CJK SC", sans-serif;
  font-size: 11px;
  white-space: nowrap;
  overflow: hidden;
`;
const Tray = styled.div`
  display: flex;
  flex: none;
  width: 148px;
  height: 38px;
  padding: 2px 12px 0 3px;
  border: 1px solid;
  border-color: #808080 #fff #fff #808080;
`;
const TrayGrid = styled.div`
  display: grid;
  grid-template-columns: repeat(5, 18px);
  grid-auto-rows: 18px;
`;
const Lang = styled.span`
  width: 16px;
  height: 16px;
  background: #0a1e8c;
  color: #fff;
  font: 10px/16px ${UI_FONT};
  text-align: center;
`;
const Time = styled.time`
  margin: 1px 0 0 auto;
  font-family: "DejaVu Sans Condensed", sans-serif;
  font-size: 11px;
`;

const App = () => (
  <Desktop>
    <GlobalStyle />
    <Caption icon={<RichIcon />} title="Richchart" app />
    <MenuBar>
      {menus.map(m => <MenuButton key={m}>{m}</MenuButton>)}
    </MenuBar>
    <Toolbar>
      <Band>
        <Tools items={navIcons} />
        <Separator />
        <Tools items={zoomIcons} />
        <Separator />
        <Tools items={pointerIcons} />
      </Band>
      <Band>
        {periods.map(p => <ToolButton key={p} aria-label={`${p}周期`}><Clock label={p} /></ToolButton>)}
        <ToolButton aria-label="更多周期"><Svg><path d="M6 6h5v2h1v1h-2v2h-3V9H5V8h1z" fill="#000" /></Svg></ToolButton>
        <Separator />
        <Tools items={chartIcons} />
      </Band>
      <Band $grow>
        <CodeLabel htmlFor="code">输入代码:</CodeLabel>
        <CodeInput id="code" />
      </Band>
      <Band>
        <ToolButton aria-label="闪电"><Svg crisp={false}><path d="M13 2L5 8h6l-7 6" stroke="#a02020" strokeWidth="2" /></Svg></ToolButton>
        <Separator />
        <ToolButton aria-label="层叠窗口"><Svg><path d="M7.500 2.500h6v6h-6zM2.500 5.500h6v8h-6z" fill="#ffd800" stroke="#302000" /><path d="M6.500 7v5M7.500 5v3" stroke="#806000" /></Svg></ToolButton>
      </Band>
    </Toolbar>
    <Middle>
      <SideBar>
        <SideTools>
          <Tools items={drawIcons} />
          <SideRule />
          <Tools items={markIcons} />
        </SideTools>
      </SideBar>
      <Workspace>
        <TiledWindow>
          <Caption inactive icon={<RichIcon />} title="" />
        </TiledWindow>
        <TiledWindow>
          <Caption inactive icon={<RichIcon />} title="" />
          <Chart chart={charts.yen} time="2004.04.15" quote={yenQuote} />
        </TiledWindow>
        <TiledWindow>
          <Caption inactive icon={<RichIcon />} title="" />
          <Chart chart={charts.daily} />
        </TiledWindow>
        <QuoteWindow />
        <FloatingWindow>
          <Caption icon={<RichIcon />} title="BP/US(英镑美元) - 一分钟图" />
          <Chart chart={charts.minute} time="2004.04.15 13:21:00" quote={minuteQuote} />
        </FloatingWindow>
      </Workspace>
    </Middle>
    <StatusBar>
      <span>就绪</span>
      <StatusItem><Ball a="#50e850" b="#108818" />连接</StatusItem>
      <StatusItem $last><Ball a="#d0d0d0" b="#909090" />数据</StatusItem>
      <ImeBar>
        <span>中</span>
        <Svg w={12} h={12} crisp={false}><path d="M2 1h3v3L2 7z" fill="#a010a0" /><circle cx="9" cy="9" r="2" stroke="#a010a0" strokeWidth="1.300" /></Svg>
        <Svg w={10} h={12} crisp={false}><path d="M7 1c4 5 0 10-7 9 4-1 7-4 7-9z" fill="#a010a0" /></Svg>
        <Svg w={13} h={10}><path d="M.5 1.500h12v7H.5z" stroke="#b080b0" /><path d="M2 3.500h9M2 5.500h9M3 7.500h7" stroke="#a060a0" strokeDasharray="2 1" /></Svg>
        <Svg w={11} h={12}><path d="M.5.500h10v11H.5z" stroke="#505" /><path d="M1 1h9v3H1z" fill="#a010a0" /><path d="M3 6.500h6M3 8.500h6" stroke="#505" /></Svg>
      </ImeBar>
    </StatusBar>
    <TaskBar>
      <StartButton>
        <Svg crisp={false}>
          <path d="M6 2c3-2 6 1 9 0v12c-3 1-6-1-9 0z" fill="#000" />
          <path d="M7 3.500q2-1 3 0v4q-2-1-3 0z" fill="#f02020" /><path d="M11 4q2 1 3 0v3q-1 1-3 0z" fill="#20c020" />
          <path d="M7 9q2-1 3 0v4q-2-1-3 0z" fill="#2040f0" /><path d="M11 9q2 1 3 0v3q-1 1-3 0z" fill="#f8e020" />
          <path d="M0 4h2M3 4h2M0 7h2M3 7h2" stroke="#e02020" strokeWidth="1.500" /><path d="M0 10h2M3 10h2M0 13h2M3 13h2" stroke="#2040e0" strokeWidth="1.500" />
        </Svg>
        开始
      </StartButton>
      <TaskRows>
        <TaskRow>
          <Tools items={launchIcons} />
        </TaskRow>
        <TaskRow $gap>
          {tasks.map(([name, icon], i) => (
            <TaskButton key={name} $active={i === tasks.length - 1}>{icon}{name}</TaskButton>
          ))}
        </TaskRow>
      </TaskRows>
      <Tray>
        <TrayGrid>
          {trayIcons.map((icon, i) => <React.Fragment key={i}>{icon}</React.Fragment>)}
          <Lang>CH</Lang>
        </TrayGrid>
        <Time>13:21</Time>
      </Tray>
    </TaskBar>
  </Desktop>
);

export default App;
